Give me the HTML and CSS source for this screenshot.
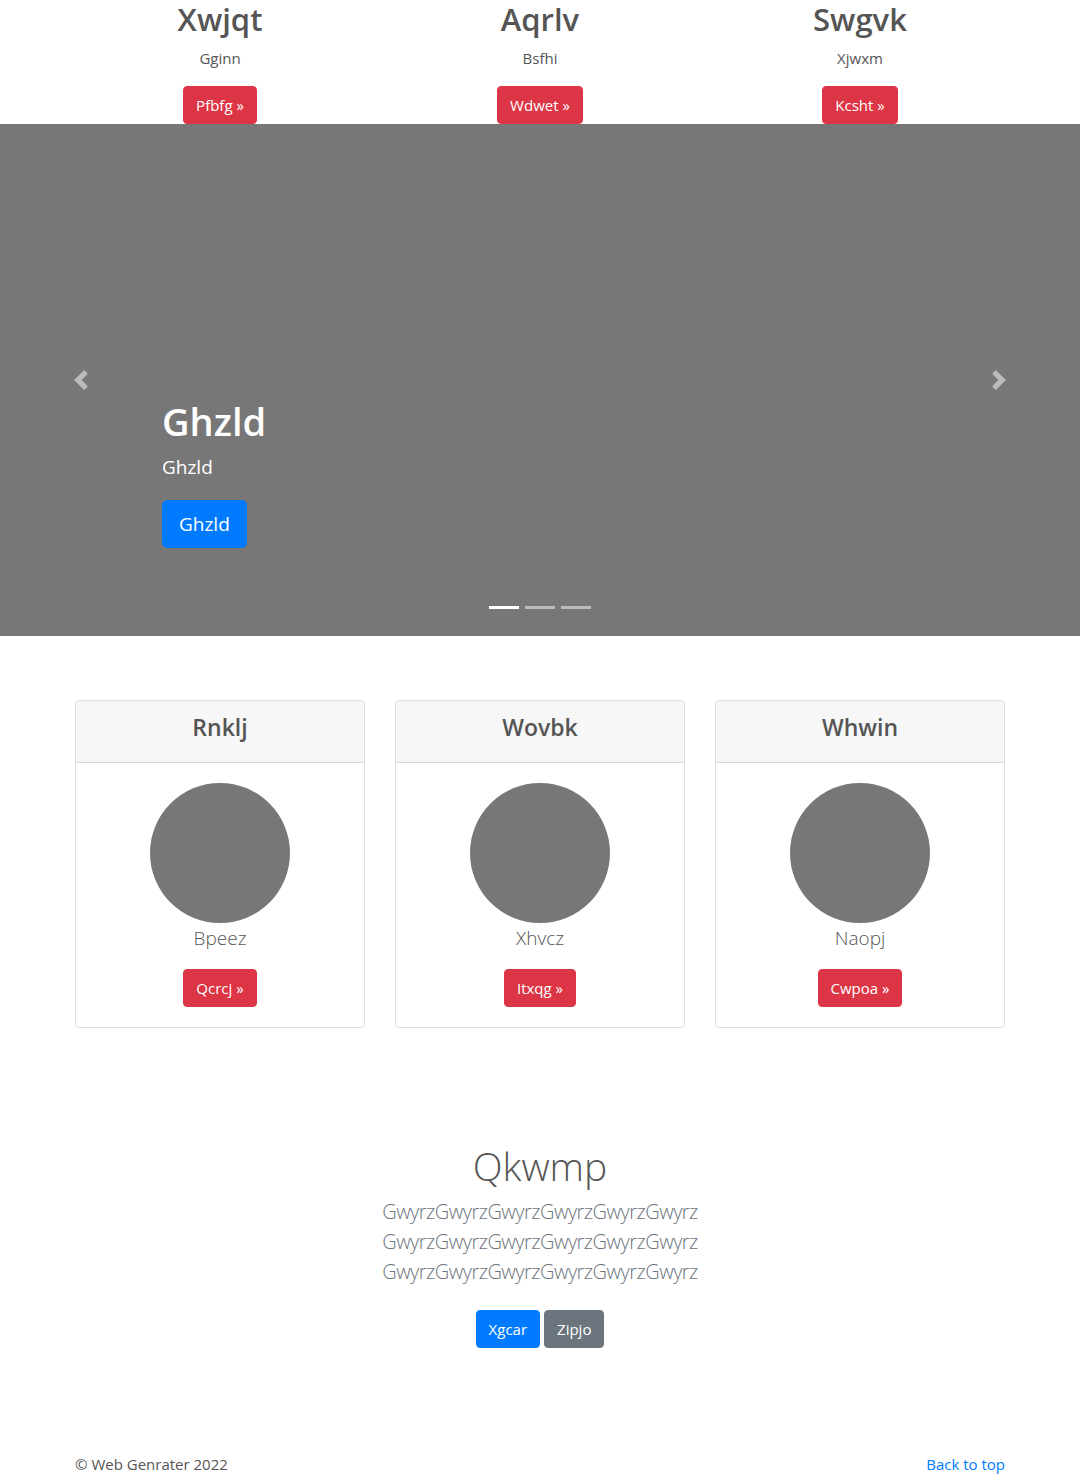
FILE: index.html
```html
<!DOCTYPE html>
<html lang="en">
<head>
<meta charset="utf-8">
<title>Page</title>
<link rel="stylesheet" href="styles.css">
</head>
<body>
<section class="top container">
  <div class="top-col">
    <h2 class="top-title">Xwjqt</h2>
    <p class="top-text">Gginn</p>
    <p class="top-action"><a class="btn btn-danger" href="#">Pfbfg &raquo;</a></p>
  </div>
  <div class="top-col">
    <h2 class="top-title">Aqrlv</h2>
    <p class="top-text">Bsfhi</p>
    <p class="top-action"><a class="btn btn-danger" href="#">Wdwet &raquo;</a></p>
  </div>
  <div class="top-col">
    <h2 class="top-title">Swgvk</h2>
    <p class="top-text">Xjwxm</p>
    <p class="top-action"><a class="btn btn-danger" href="#">Kcsht &raquo;</a></p>
  </div>
</section>

<section class="carousel">
  <a class="carousel-control prev" href="#">
    <svg class="carousel-icon" viewBox="0 0 8 8" width="20" height="20"><path fill="#fff" d="M5.25 0l-4 4 4 4 1.5-1.5L4.25 4l2.5-2.5L5.25 0z"/></svg>
  </a>
  <div class="carousel-caption">
    <h1 class="caption-title">Ghzld</h1>
    <p class="caption-text">Ghzld</p>
    <a class="btn btn-lg btn-primary" href="#">Ghzld</a>
  </div>
  <a class="carousel-control next" href="#">
    <svg class="carousel-icon" viewBox="0 0 8 8" width="20" height="20"><path fill="#fff" d="M2.75 0l-1.5 1.5L3.75 4l-2.5 2.5L2.75 8l4-4-4-4z"/></svg>
  </a>
  <ol class="carousel-indicators">
    <li class="indicator active"></li>
    <li class="indicator"></li>
    <li class="indicator"></li>
  </ol>
</section>

<section class="cards container">
  <div class="card-col">
    <div class="card">
      <div class="card-header"><h4 class="card-title">Rnklj</h4></div>
      <div class="card-body">
        <div class="circle"></div>
        <p class="card-lead">Bpeez</p>
        <a class="btn btn-danger" href="#">Qcrcj &raquo;</a>
      </div>
    </div>
  </div>
  <div class="card-col">
    <div class="card">
      <div class="card-header"><h4 class="card-title">Wovbk</h4></div>
      <div class="card-body">
        <div class="circle"></div>
        <p class="card-lead">Xhvcz</p>
        <a class="btn btn-danger" href="#">Itxqg &raquo;</a>
      </div>
    </div>
  </div>
  <div class="card-col">
    <div class="card">
      <div class="card-header"><h4 class="card-title">Whwin</h4></div>
      <div class="card-body">
        <div class="circle"></div>
        <p class="card-lead">Naopj</p>
        <a class="btn btn-danger" href="#">Cwpoa &raquo;</a>
      </div>
    </div>
  </div>
</section>

<section class="intro">
  <h1 class="intro-title">Qkwmp</h1>
  <p class="intro-lead">GwyrzGwyrzGwyrzGwyrzGwyrzGwyrz<br>GwyrzGwyrzGwyrzGwyrzGwyrzGwyrz<br>GwyrzGwyrzGwyrzGwyrzGwyrzGwyrz</p>
  <div class="intro-actions">
    <a class="btn btn-primary" href="#">Xgcar</a>
    <a class="btn btn-secondary" href="#">Zipjo</a>
  </div>
</section>

<footer class="footer container">
  <p class="footer-copy">&copy; Web Genrater 2022</p>
  <a class="footer-link" href="#">Back to top</a>
</footer>
</body>
</html>
```

FILE: styles.css
```css
* { box-sizing: border-box; }

html, body {
  margin: 0;
  padding: 0;
}

body {
  font-family: "Open Sans", "Noto Sans", "DejaVu Sans", sans-serif;
  font-size: 16px;
  line-height: 1.5;
  color: #555;
  background: #fff;
}

a { text-decoration: none; }

.container {
  width: 960px;
  margin: 0 auto;
}

/* Buttons */
.btn {
  display: inline-block;
  font-size: 15px;
  line-height: 24px;
  padding: 6px 12px;
  border: 1px solid transparent;
  border-radius: 4px;
  color: #fff;
  font-weight: 400;
  text-align: center;
  vertical-align: middle;
}
.btn-lg {
  font-size: 19px;
  line-height: 30px;
  padding: 8px 16px;
  border-radius: 5px;
}
.btn-danger { background: #dc3545; border-color: #dc3545; }
.btn-primary { background: #007bff; border-color: #007bff; }
.btn-secondary { background: #6c757d; border-color: #6c757d; }

/* Top columns */
.top {
  display: grid;
  grid-template-columns: repeat(3, 1fr);
}
.top-col {
  text-align: center;
  padding: 0 15px;
}
.top-title {
  margin: 0 0 8px;
  padding-top: 1px;
  font-size: 31px;
  line-height: 37px;
  font-weight: 600;
  color: #555;
}
.top-text {
  margin: 0 0 16px;
  font-size: 15px;
  line-height: 24px;
}
.top-action {
  margin: 0;
  display: flex;
  justify-content: center;
}

/* Carousel */
.carousel {
  position: relative;
  height: 512px;
  background: #777;
  display: flex;
  justify-content: space-between;
  align-items: center;
}
.carousel-control {
  width: 15%;
  height: 100%;
  display: flex;
  align-items: center;
  justify-content: center;
  opacity: 0.5;
}
.carousel-icon { display: block; }
.carousel-caption {
  position: absolute;
  left: 15%;
  right: 15%;
  bottom: 88px;
  color: #fff;
}
.caption-title {
  margin: 0 0 7px;
  font-size: 38px;
  line-height: 48px;
  font-weight: 600;
}
.caption-text {
  margin: 0 0 18px;
  font-size: 19px;
  line-height: 30px;
}
.carousel-indicators {
  position: absolute;
  left: 0;
  right: 0;
  bottom: 27px;
  margin: 0;
  padding: 0;
  list-style: none;
  display: flex;
  justify-content: center;
  gap: 6px;
}
.indicator {
  width: 30px;
  height: 3px;
  background: #fff;
  opacity: 0.5;
}
.indicator.active { opacity: 1; }

/* Cards */
.cards {
  display: grid;
  grid-template-columns: repeat(3, 1fr);
  margin-top: 64px;
}
.card-col { padding: 0 15px; }
.card {
  border: 1px solid rgba(0,0,0,.125);
  border-radius: 4px;
  text-align: center;
  overflow: hidden;
}
.card-header {
  background: #f7f7f7;
  border-bottom: 1px solid rgba(0,0,0,.125);
  padding: 12px 20px;
}
.card-title {
  margin: 0 0 8px;
  font-size: 23px;
  line-height: 29px;
  font-weight: 600;
  color: #555;
}
.card-body {
  padding: 20px;
  display: flex;
  flex-direction: column;
  align-items: center;
}
.circle {
  width: 140px;
  height: 140px;
  border-radius: 50%;
  background: #777;
}
.card-lead {
  margin: 0 0 16px;
  font-size: 19px;
  line-height: 30px;
  font-weight: 300;
}

/* Intro */
.intro {
  text-align: center;
  padding: 115px 0 32px;
}
.intro-title {
  margin: 0 0 8px;
  font-size: 39px;
  line-height: 46px;
  font-weight: 300;
  color: #555;
}
.intro-lead {
  margin: 0 0 16px;
  font-size: 20px;
  line-height: 30px;
  font-weight: 300;
  letter-spacing: -0.5px;
  color: #6c757d;
}
.intro-actions {
  display: flex;
  justify-content: center;
  gap: 4px;
  padding: 7px 0 8px;
}

/* Footer */
.footer {
  display: flex;
  justify-content: space-between;
  padding: 65px 15px 0;
}
.footer-copy {
  margin: 0;
  color: #555;
  font-size: 15px;
}
.footer-link { color: #007bff; font-size: 15px; }
```
